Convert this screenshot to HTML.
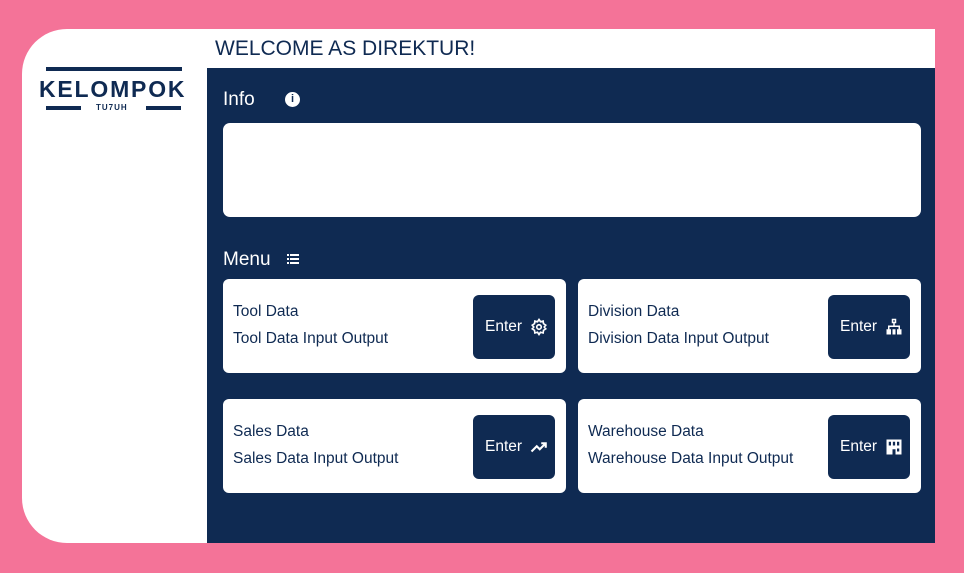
<!DOCTYPE html><html><head><style>
body{margin:0;width:964px;height:573px;background:#f47398;position:relative;overflow:hidden;font-family:"Liberation Sans",sans-serif;color:#0f2a52}
.panel{position:absolute;left:22px;top:29px;width:913px;height:514px;background:#fff;border-radius:45px 0 0 45px;overflow:hidden}
.nav{position:absolute;left:207px;top:68px;width:728px;height:475px;background:#0f2a52}
.t{position:absolute;color:#fff;font-size:19px}
.box{position:absolute;background:#fff;border-radius:7px}
.card{position:absolute;background:#fff;border-radius:6px;width:343px;height:94px}
.card .a{position:absolute;left:10px;top:24px;font-size:15.5px}
.card .b{position:absolute;left:10px;top:51px;font-size:15.5px}
.btn{position:absolute;left:250px;top:16px;width:82px;height:64px;background:#0f2a52;border-radius:6px;color:#fff;font-size:15.5px}
.btn span{position:absolute;left:12px;top:23px}
.btn svg{position:absolute;left:57px;top:23px}
</style></head><body>
<div class="panel"></div>
<div style="position:absolute;left:46px;top:67px;width:136px;height:4px;background:#0f2a52"></div>
<div style="position:absolute;left:39px;top:76px;font-size:23px;font-weight:bold;letter-spacing:1.8px">KELOMPOK</div>
<div style="position:absolute;left:46px;top:106px;width:35px;height:4px;background:#0f2a52"></div>
<div style="position:absolute;left:146px;top:106px;width:35px;height:4px;background:#0f2a52"></div>
<div style="position:absolute;left:96px;top:103px;font-size:8px;font-weight:bold;letter-spacing:1px">TU7UH</div>
<div style="position:absolute;left:215px;top:37px;font-size:21px">WELCOME AS DIREKTUR!</div>
<div class="nav"></div>
<div class="t" style="left:223px;top:89px">Info</div>
<div style="position:absolute;left:285px;top:92px;width:15px;height:15px;border-radius:50%;background:#fff;color:#0f2a52;font-size:11px;font-weight:bold;text-align:center;line-height:15px">i</div>
<div class="box" style="left:223px;top:123px;width:698px;height:94px"></div>
<div class="t" style="left:223px;top:249px">Menu</div>
<svg style="position:absolute;left:287px;top:254px" width="12" height="10" fill="#fff"><rect x="0" y="0" width="2" height="2"/><rect x="3" y="0" width="9" height="2"/><rect x="0" y="4" width="2" height="2"/><rect x="3" y="4" width="9" height="2"/><rect x="0" y="8" width="2" height="2"/><rect x="3" y="8" width="9" height="2"/></svg>
<div class="card" style="left:223px;top:279px"><div class="a">Tool Data</div><div class="b">Tool Data Input Output</div><div class="btn"><span>Enter</span><svg width="18" height="18" viewBox="0 0 24 24" fill="none" stroke="#fff" stroke-width="2.2"><circle cx="12" cy="12" r="3"/><path d="M12 2l2 3 3.5-1 .5 3.5 3 2-2 2.5 2 2.5-3 2-.5 3.5-3.5-1-2 3-2-3-3.5 1-.5-3.5-3-2 2-2.5-2-2.5 3-2L6.5 4 10 5z"/></svg></div></div>
<div class="card" style="left:578px;top:279px"><div class="a">Division Data</div><div class="b">Division Data Input Output</div><div class="btn"><span>Enter</span><svg width="18" height="18" viewBox="0 0 24 24" fill="#fff"><path d="M9 1h6v6h-2v3h7v5h2v7h-6v-7h2v-3h-12v3h2v7h-6v-7h2v-5h7v-3h-2zM11 3v2h2v-2z"/><path d="M10 15h4v7h-4z"/></svg></div></div>
<div class="card" style="left:223px;top:399px"><div class="a">Sales Data</div><div class="b">Sales Data Input Output</div><div class="btn"><span>Enter</span><svg width="18" height="18" viewBox="0 0 24 24" fill="none" stroke="#fff" stroke-width="2.8"><path d="M2 18l7-7 4 4 8-8M15 7h6v6"/></svg></div></div>
<div class="card" style="left:578px;top:399px"><div class="a">Warehouse Data</div><div class="b">Warehouse Data Input Output</div><div class="btn"><span>Enter</span><svg width="18" height="18" viewBox="0 0 24 24" fill="#fff"><path d="M2 2h20v20h-8v-7h-4v7h-8zM5 5v5h3v-5zM10.5 5v5h3v-5zM16 5v5h3v-5zM16 14v4h3v-4z"/></svg></div></div>
</body></html>
